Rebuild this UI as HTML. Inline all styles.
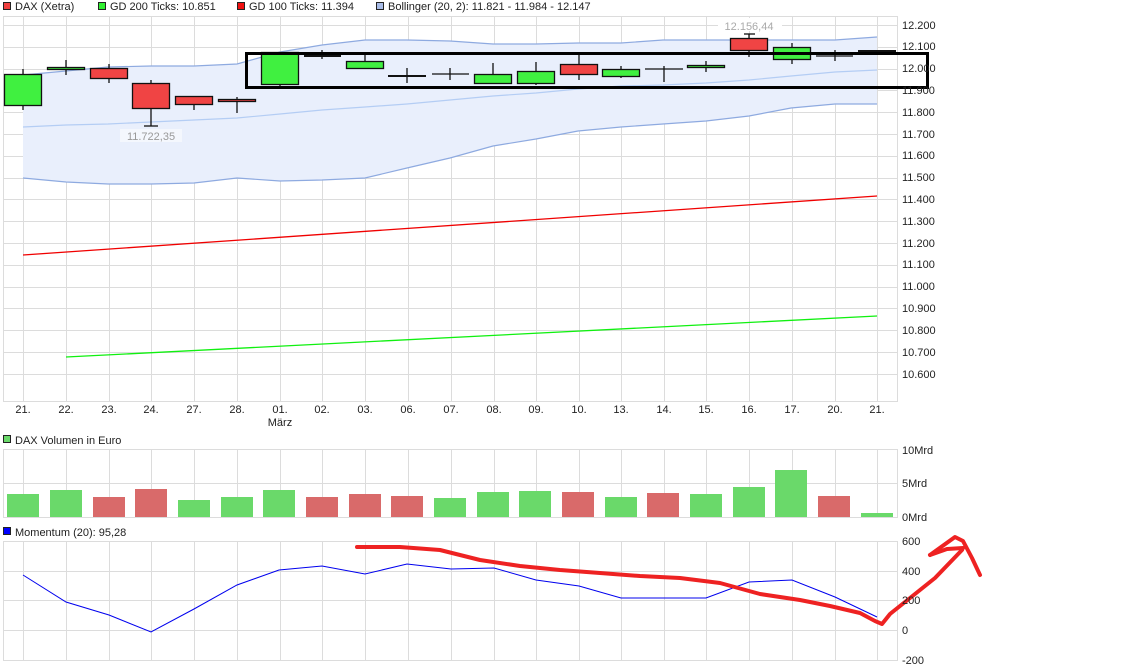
<!DOCTYPE html>
<html><head><meta charset="utf-8"><style>
html,body{margin:0;padding:0;background:#fff;width:1125px;height:670px;overflow:hidden}
svg{display:block}
text{font-family:"Liberation Sans",sans-serif;font-size:11px;fill:#222}
</style></head><body>
<svg width="1125" height="670" xmlns="http://www.w3.org/2000/svg">
<rect x="3.5" y="2.5" width="7" height="7" fill="#f04040" stroke="#222"/><text x="15" y="10">DAX (Xetra)</text>
<rect x="98.5" y="2.5" width="7" height="7" fill="#30f030" stroke="#222"/><text x="110" y="10">GD 200 Ticks: 10.851</text>
<rect x="237.5" y="2.5" width="7" height="7" fill="#f01010" stroke="#222"/><text x="249" y="10">GD 100 Ticks: 11.394</text>
<rect x="376.5" y="2.5" width="7" height="7" fill="#a8bce8" stroke="#222"/><text x="388" y="10">Bollinger (20, 2): 11.821 - 11.984 - 12.147</text>

<g stroke="#dcdcdc" stroke-width="1" fill="none">
<rect x="3.5" y="16.5" width="894" height="385"/>
<path d="M3 25.5H897M3 47.5H897M3 69.5H897M3 90.5H897M3 112.5H897M3 134.5H897M3 156.5H897M3 178.5H897M3 199.5H897M3 221.5H897M3 243.5H897M3 265.5H897M3 287.5H897M3 308.5H897M3 330.5H897M3 352.5H897M3 374.5H897"/>
<path d="M23.5 16V401M66.5 16V401M109.5 16V401M151.5 16V401M194.5 16V401M237.5 16V401M280.5 16V401M322.5 16V401M365.5 16V401M408.5 16V401M451.5 16V401M494.5 16V401M536.5 16V401M579.5 16V401M621.5 16V401M664.5 16V401M706.5 16V401M749.5 16V401M792.5 16V401M835.5 16V401M877.5 16V401"/>
</g>
<polygon fill="#e9effc" points="23,75 66,71 108,67 151,66 194,66 237,64 280,52 322,45 365,40 407,40 450,41 493,44 536,44 578,43 621,43 663,40 706,40 749,40 791,40 835,40 877,37 877,104 835,104 791,108 749,116 706,121 663,124 621,127 578,131 536,139 493,146 450,158 407,168 365,178 322,180 280,181 237,178 194,183 151,184 108,184 66,182 23,178"/>
<polyline fill="none" stroke="#8eaae0" stroke-width="1.2" points="23,75 66,71 108,67 151,66 194,66 237,64 280,52 322,45 365,40 407,40 450,41 493,44 536,44 578,43 621,43 663,40 706,40 749,40 791,40 835,40 877,37"/>
<polyline fill="none" stroke="#b4cdf4" stroke-width="1.2" points="23,127 66,125 108,124 151,122 194,120 237,118 280,114 322,110 365,107 407,104 450,100 493,96 536,93 578,89 621,86 663,85 706,83 749,80 791,76 835,72 877,70"/>
<polyline fill="none" stroke="#8eaae0" stroke-width="1.2" points="23,178 66,182 108,184 151,184 194,183 237,178 280,181 322,180 365,178 407,168 450,158 493,146 536,139 578,131 621,127 663,124 706,121 749,116 791,108 835,104 877,104"/>
<line x1="23" y1="255" x2="877" y2="196" stroke="#f00000" stroke-width="1.3"/>
<line x1="66" y1="357" x2="877" y2="316" stroke="#10f010" stroke-width="1.3"/>

<g stroke="#111" stroke-width="1.3">
<path d="M23 69V110M66 60V75M109 64V83M151 80V126M194 96V110M237 97V113M280 84V87M322 50V59M365 55V69M407 68V83M450 68V80M493 63V83M536 62V85M579 54V80M621 66V78M664 66V82M706 61V72M749 34V57M792 43V64M835 50V61"/>
<path d="M144 126H158"/>
<path d="M744 34H755"/>
</g>
<g stroke="#111" stroke-width="1.3">
<rect x="4.5" y="74.5" width="37" height="31" fill="#40f040"/>
<rect x="47.5" y="67.5" width="37" height="2" fill="#40f040"/>
<rect x="90.5" y="68.5" width="37" height="10" fill="#f04444"/>
<rect x="132.5" y="83.5" width="37" height="25" fill="#f04444"/>
<rect x="175.5" y="96.5" width="37" height="8" fill="#f04444"/>
<rect x="218.5" y="99.5" width="37" height="2" fill="#f04444"/>
<rect x="261.5" y="52.5" width="37" height="32" fill="#40f040"/>
<rect x="346.5" y="61.5" width="37" height="7" fill="#40f040"/>
<rect x="474.5" y="74.5" width="37" height="9" fill="#40f040"/>
<rect x="517.5" y="71.5" width="37" height="12" fill="#40f040"/>
<rect x="560.5" y="64.5" width="37" height="10" fill="#f04444"/>
<rect x="602.5" y="69.5" width="37" height="7" fill="#40f040"/>
<rect x="687.5" y="65.5" width="37" height="2" fill="#40f040"/>
<rect x="730.5" y="38.5" width="37" height="12" fill="#f04444"/>
<rect x="773.5" y="47.5" width="37" height="12" fill="#40f040"/>
</g>
<g stroke="#111" stroke-width="2">
<path d="M304 56H341M388 76H426"/>
</g>
<g stroke="#111" stroke-width="1.3"><path d="M432 74H469M645 69H683M816 56H853"/></g>
<rect x="858" y="50" width="38" height="4" fill="#111"/>
<rect x="120" y="129" width="62" height="13" fill="#f4f7fd"/>
<text x="151" y="140" text-anchor="middle" style="fill:#999">11.722,35</text>
<rect x="718" y="18" width="64" height="13" fill="#fff"/>
<text x="749" y="30" text-anchor="middle" style="fill:#aaa">12.156,44</text>
<rect x="246.5" y="53.5" width="681" height="34" fill="none" stroke="#000" stroke-width="3"/>

<g>
<text x="902" y="29">12.200</text><text x="902" y="50">12.100</text><text x="902" y="72">12.000</text><text x="902" y="94">11.900</text><text x="902" y="116">11.800</text><text x="902" y="138">11.700</text><text x="902" y="159">11.600</text><text x="902" y="181">11.500</text><text x="902" y="203">11.400</text><text x="902" y="225">11.300</text><text x="902" y="247">11.200</text><text x="902" y="268">11.100</text><text x="902" y="290">11.000</text><text x="902" y="312">10.900</text><text x="902" y="334">10.800</text><text x="902" y="356">10.700</text><text x="902" y="378">10.600</text>
</g>
<g text-anchor="middle">
<text x="23" y="413">21.</text><text x="66" y="413">22.</text><text x="109" y="413">23.</text><text x="151" y="413">24.</text><text x="194" y="413">27.</text><text x="237" y="413">28.</text><text x="280" y="413">01.</text><text x="322" y="413">02.</text><text x="365" y="413">03.</text><text x="408" y="413">06.</text><text x="451" y="413">07.</text><text x="494" y="413">08.</text><text x="536" y="413">09.</text><text x="579" y="413">10.</text><text x="621" y="413">13.</text><text x="664" y="413">14.</text><text x="706" y="413">15.</text><text x="749" y="413">16.</text><text x="792" y="413">17.</text><text x="835" y="413">20.</text><text x="877" y="413">21.</text>
<text x="280" y="426">März</text>
</g>

<rect x="3.5" y="435.5" width="7" height="7" fill="#6ad96a" stroke="#222"/><text x="15" y="444">DAX Volumen in Euro</text>
<g stroke="#dcdcdc" fill="none">
<rect x="3.5" y="449.5" width="894" height="68"/>
<path d="M3 483.5H897"/>
<path d="M23.5 449V517M66.5 449V517M109.5 449V517M151.5 449V517M194.5 449V517M237.5 449V517M280.5 449V517M322.5 449V517M365.5 449V517M408.5 449V517M451.5 449V517M494.5 449V517M536.5 449V517M579.5 449V517M621.5 449V517M664.5 449V517M706.5 449V517M749.5 449V517M792.5 449V517M835.5 449V517M877.5 449V517"/>
</g>
<g>
<rect x="7" y="494" width="32" height="23" fill="#6ad96a"/>
<rect x="50" y="490" width="32" height="27" fill="#6ad96a"/>
<rect x="93" y="497" width="32" height="20" fill="#d96a6a"/>
<rect x="135" y="489" width="32" height="28" fill="#d96a6a"/>
<rect x="178" y="500" width="32" height="17" fill="#6ad96a"/>
<rect x="221" y="497" width="32" height="20" fill="#6ad96a"/>
<rect x="263" y="490" width="32" height="27" fill="#6ad96a"/>
<rect x="306" y="497" width="32" height="20" fill="#d96a6a"/>
<rect x="349" y="494" width="32" height="23" fill="#d96a6a"/>
<rect x="391" y="496" width="32" height="21" fill="#d96a6a"/>
<rect x="434" y="498" width="32" height="19" fill="#6ad96a"/>
<rect x="477" y="492" width="32" height="25" fill="#6ad96a"/>
<rect x="519" y="491" width="32" height="26" fill="#6ad96a"/>
<rect x="562" y="492" width="32" height="25" fill="#d96a6a"/>
<rect x="605" y="497" width="32" height="20" fill="#6ad96a"/>
<rect x="647" y="493" width="32" height="24" fill="#d96a6a"/>
<rect x="690" y="494" width="32" height="23" fill="#6ad96a"/>
<rect x="733" y="487" width="32" height="30" fill="#6ad96a"/>
<rect x="775" y="470" width="32" height="47" fill="#6ad96a"/>
<rect x="818" y="496" width="32" height="21" fill="#d96a6a"/>
<rect x="861" y="513" width="32" height="4" fill="#6ad96a"/>
</g>
<text x="902" y="454">10Mrd</text><text x="902" y="487">5Mrd</text><text x="902" y="521">0Mrd</text>

<rect x="3.5" y="527.5" width="7" height="7" fill="#0000ff" stroke="#222"/><text x="15" y="536">Momentum (20): 95,28</text>
<g stroke="#dcdcdc" fill="none">
<rect x="3.5" y="541.5" width="894" height="119"/>
<path d="M3 571.5H897M3 600.5H897M3 630.5H897"/>
<path d="M23.5 541V660M66.5 541V660M109.5 541V660M151.5 541V660M194.5 541V660M237.5 541V660M280.5 541V660M322.5 541V660M365.5 541V660M408.5 541V660M451.5 541V660M494.5 541V660M536.5 541V660M579.5 541V660M621.5 541V660M664.5 541V660M706.5 541V660M749.5 541V660M792.5 541V660M835.5 541V660M877.5 541V660"/>
</g>
<polyline fill="none" stroke="#0000ee" stroke-width="1" points="23,575 66,602 109,615 151,632 194,609 237,585 279,570 322,566 365,574 407,564 451,569 494,568 536,580 579,586 621,598 664,598 706,598 749,582 792,580 835,597 877,617"/>
<g fill="none" stroke="#ee2222" stroke-width="4" stroke-linecap="round" stroke-linejoin="round">
<path d="M357 547L400 547L440 550L480 560L520 566L560 570L600 573L640 576L680 578L720 583L760 594L800 600L830 606L860 613L875 621L882 624L890 614L910 598L935 578L962 550"/>
<path d="M930 555L947 549L963 548"/>
<path d="M930 555L955 537L963 541L972 558L980 575"/>
</g>
<text x="902" y="545">600</text><text x="902" y="575">400</text><text x="902" y="604">200</text><text x="902" y="634">0</text><text x="902" y="664">-200</text>
</svg>
</body></html>
